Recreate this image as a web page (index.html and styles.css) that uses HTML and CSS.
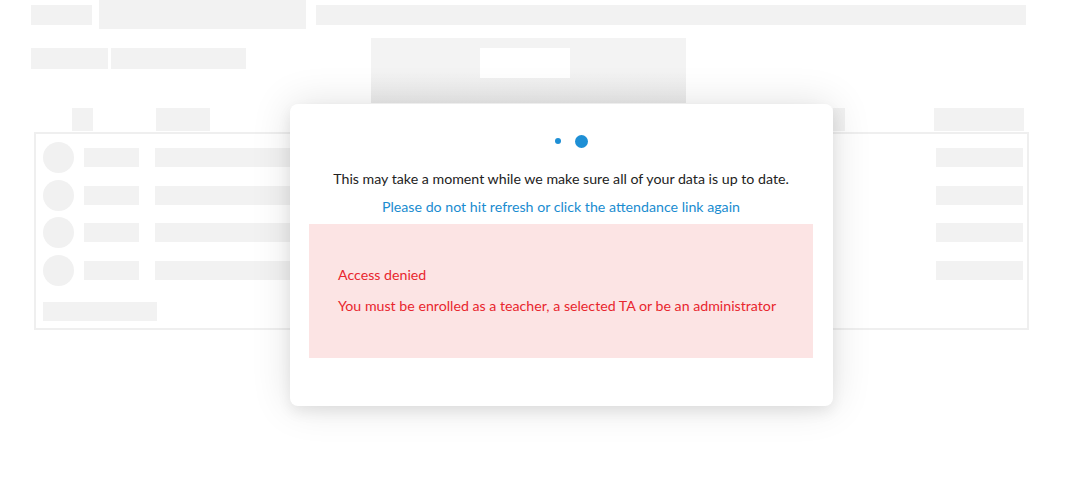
FILE: index.html
```html
<!DOCTYPE html>
<html lang="en">
<head>
<meta charset="utf-8">
<title>Attendance</title>
<link rel="stylesheet" href="styles.css">
</head>
<body>
<div class="page">
  <div class="row-top">
    <div class="sk sk-a"></div>
    <div class="sk sk-b"></div>
    <div class="sk sk-c"></div>
  </div>
  <div class="row-second">
    <div class="sk sk-d"></div>
    <div class="sk sk-e"></div>
    <div class="sk sk-f"><div class="sk-f-inner"></div></div>
  </div>
  <div class="row-head">
    <div class="sk sk-h1"></div>
    <div class="sk sk-h2"></div>
    <div class="sk sk-h3"></div>
    <div class="sk sk-h4"></div>
  </div>
  <div class="table">
    <div class="trow"><div class="avatar"></div><div class="sk cell-a"></div><div class="sk cell-b"></div><div class="sk cell-c"></div></div>
    <div class="trow"><div class="avatar"></div><div class="sk cell-a"></div><div class="sk cell-b"></div><div class="sk cell-c"></div></div>
    <div class="trow"><div class="avatar"></div><div class="sk cell-a"></div><div class="sk cell-b"></div><div class="sk cell-c"></div></div>
    <div class="trow"><div class="avatar"></div><div class="sk cell-a"></div><div class="sk cell-b"></div><div class="sk cell-c"></div></div>
    <div class="sk table-foot"></div>
  </div>
</div>

<div class="modal">
  <div class="dots"><span class="dot dot-small"></span><span class="dot dot-big"></span></div>
  <p class="msg">This may take a moment while we make sure all of your data is up to date.</p>
  <p class="msg-blue">Please do not hit refresh or click the attendance link again</p>
  <div class="error">
    <p class="error-title">Access denied</p>
    <p class="error-text">You must be enrolled as a teacher, a selected TA or be an administrator</p>
  </div>
</div>
</body>
</html>
```

FILE: styles.css
```css
* { box-sizing: border-box; }
html, body { margin: 0; padding: 0; background: #fff; }
body { width: 1081px; height: 500px; overflow: hidden; font-family: Lato, "Open Sans", sans-serif; position: relative; }

.sk { background: #f2f2f2; }

.row-top { display: flex; align-items: flex-start; padding-left: 31px; height: 29px; }
.sk-a { width: 61px; height: 20px; margin-top: 5px; }
.sk-b { width: 207px; height: 29px; margin-left: 7px; }
.sk-c { width: 710px; height: 20px; margin-top: 5px; margin-left: 10px; }

.row-second { display: flex; align-items: flex-start; padding-left: 31px; margin-top: 9px; height: 65px; }
.sk-d { width: 77px; height: 21px; margin-top: 10px; }
.sk-e { width: 135px; height: 21px; margin-top: 10px; margin-left: 3px; }
.sk-f { width: 315px; height: 65px; margin-left: 125px; padding: 10px 0 0 109px; background: linear-gradient(#f3f3f3 50%, #eaeaea); }
.sk-f-inner { width: 90px; height: 30px; background: #fff; }

.row-head { display: flex; margin-top: 5px; height: 23px; }
.sk-h1 { width: 21px; height: 23px; margin-left: 72px; }
.sk-h2 { width: 54px; height: 23px; margin-left: 63px; }
.sk-h3 { width: 12px; height: 23px; margin-left: 623px; }
.sk-h4 { width: 90px; height: 23px; margin-left: 89px; }

.table { margin: 1px 0 0 34px; width: 995px; height: 198px; border: 2px solid #efefef; padding: 8px 4px 0 7px; display: flex; flex-direction: column; gap: 6.5px; }
.trow { display: flex; align-items: center; height: 31px; }
.avatar { width: 31px; height: 31px; border-radius: 50%; background: #f1f1f1; }
.cell-a { width: 55px; height: 19px; margin-left: 10px; }
.cell-b { width: 450px; height: 19px; margin-left: 16px; }
.cell-c { width: 87px; height: 19px; margin-left: auto; }
.table-foot { width: 114px; height: 19px; margin-top: 9.5px; }

.modal {
  position: absolute; left: 290px; top: 104px; width: 543px; height: 302px;
  background: #fff; border-radius: 8px;
  box-shadow: 0 0 40px rgba(0,0,0,0.12), 0 6px 14px rgba(0,0,0,0.07);
  padding: 0 20px 0 19px;
  text-align: center;
}
.dots { display: flex; justify-content: center; align-items: center; gap: 14px; height: 14px; margin-top: 30px; padding-left: 21px; }
.dot { display: block; border-radius: 50%; background: #1e8fd5; }
.dot-small { width: 6px; height: 6px; }
.dot-big { width: 13px; height: 13px; }

.msg { margin: 21px 0 0; font-size: 14.2px; line-height: 20px; color: #222; }
.msg-blue { margin: 8px 0 0; font-size: 14.2px; line-height: 20px; color: #1a8cd0; }

.error { margin-top: 7px; height: 134px; background: #fce4e4; text-align: left; padding: 41px 0 0 29px; color: #e8262e; }
.error-title { margin: 0; font-size: 14.2px; line-height: 20px; }
.error-text { margin: 11px 0 0; font-size: 14.2px; line-height: 20px; }
```
